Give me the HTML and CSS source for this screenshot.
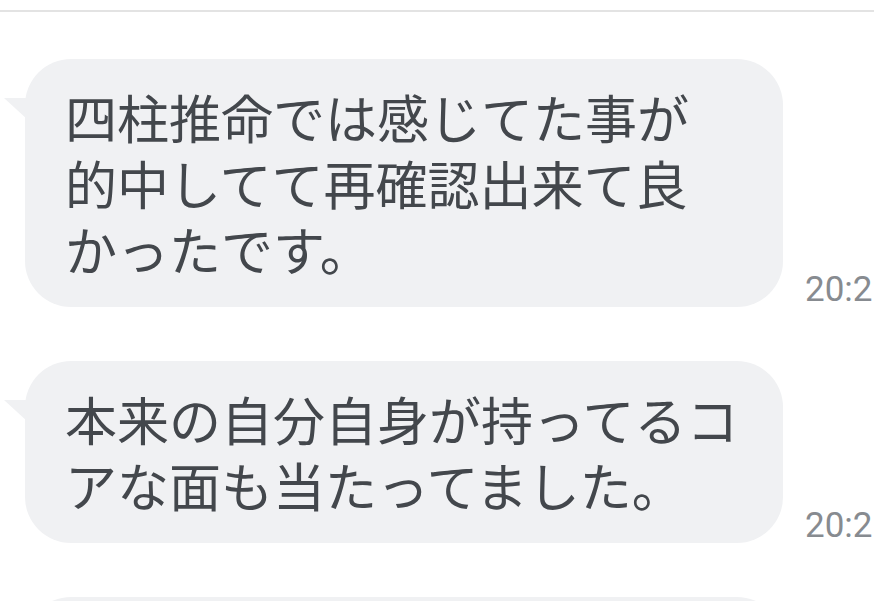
FILE: index.html
```html
<!DOCTYPE html>
<html lang="ja">
<head>
<meta charset="utf-8">
<link rel="stylesheet" href="styles.css">
</head>
<body>
<div class="topbar"></div>
<div class="thread">
  <div class="row">
    <div class="bubble">四柱推命では感じてた事が<br>的中してて再確認出来て良<br>かったです。</div>
    <div class="time">20:2</div>
  </div>
  <div class="row">
    <div class="bubble">本来の自分自身が持ってるコ<br>アな面も当たってました。</div>
    <div class="time">20:2</div>
  </div>
  <div class="row">
    <div class="bubble bubble-empty"></div>
  </div>
</div>
</body>
</html>
```
FILE: styles.css
```css
html, body {
  margin: 0;
  padding: 0;
  background: #ffffff;
  overflow: hidden;
}
.topbar {
  height: 10px;
  border-bottom: 2px solid #e3e3e3;
}
.thread {
  display: flex;
  flex-direction: column;
  gap: 54px;
  padding: 47px 0 0 25px;
}
.row {
  display: flex;
  align-items: flex-end;
  gap: 22px;
}
.bubble {
  position: relative;
  width: 758px;
  box-sizing: border-box;
  flex: none;
  background: #f0f1f3;
  border-radius: 46px;
  padding: 25px 20px 25px 40px;
  font-family: "Noto Sans CJK JP", "Noto Sans", sans-serif;
  font-size: 52px;
  line-height: 66px;
  color: #43474c;
  white-space: nowrap;
}
.bubble-empty {
  height: 120px;
}
.bubble::before {
  content: "";
  position: absolute;
  left: -21px;
  top: 39px;
  width: 24px;
  height: 22px;
  background: #f0f1f3;
  clip-path: polygon(0 0, 100% 0, 100% 100%);
}
.time {
  font-family: Roboto, "Liberation Sans", sans-serif;
  font-size: 35px;
  line-height: 35px;
  color: #878b90;
  white-space: nowrap;
}
```
